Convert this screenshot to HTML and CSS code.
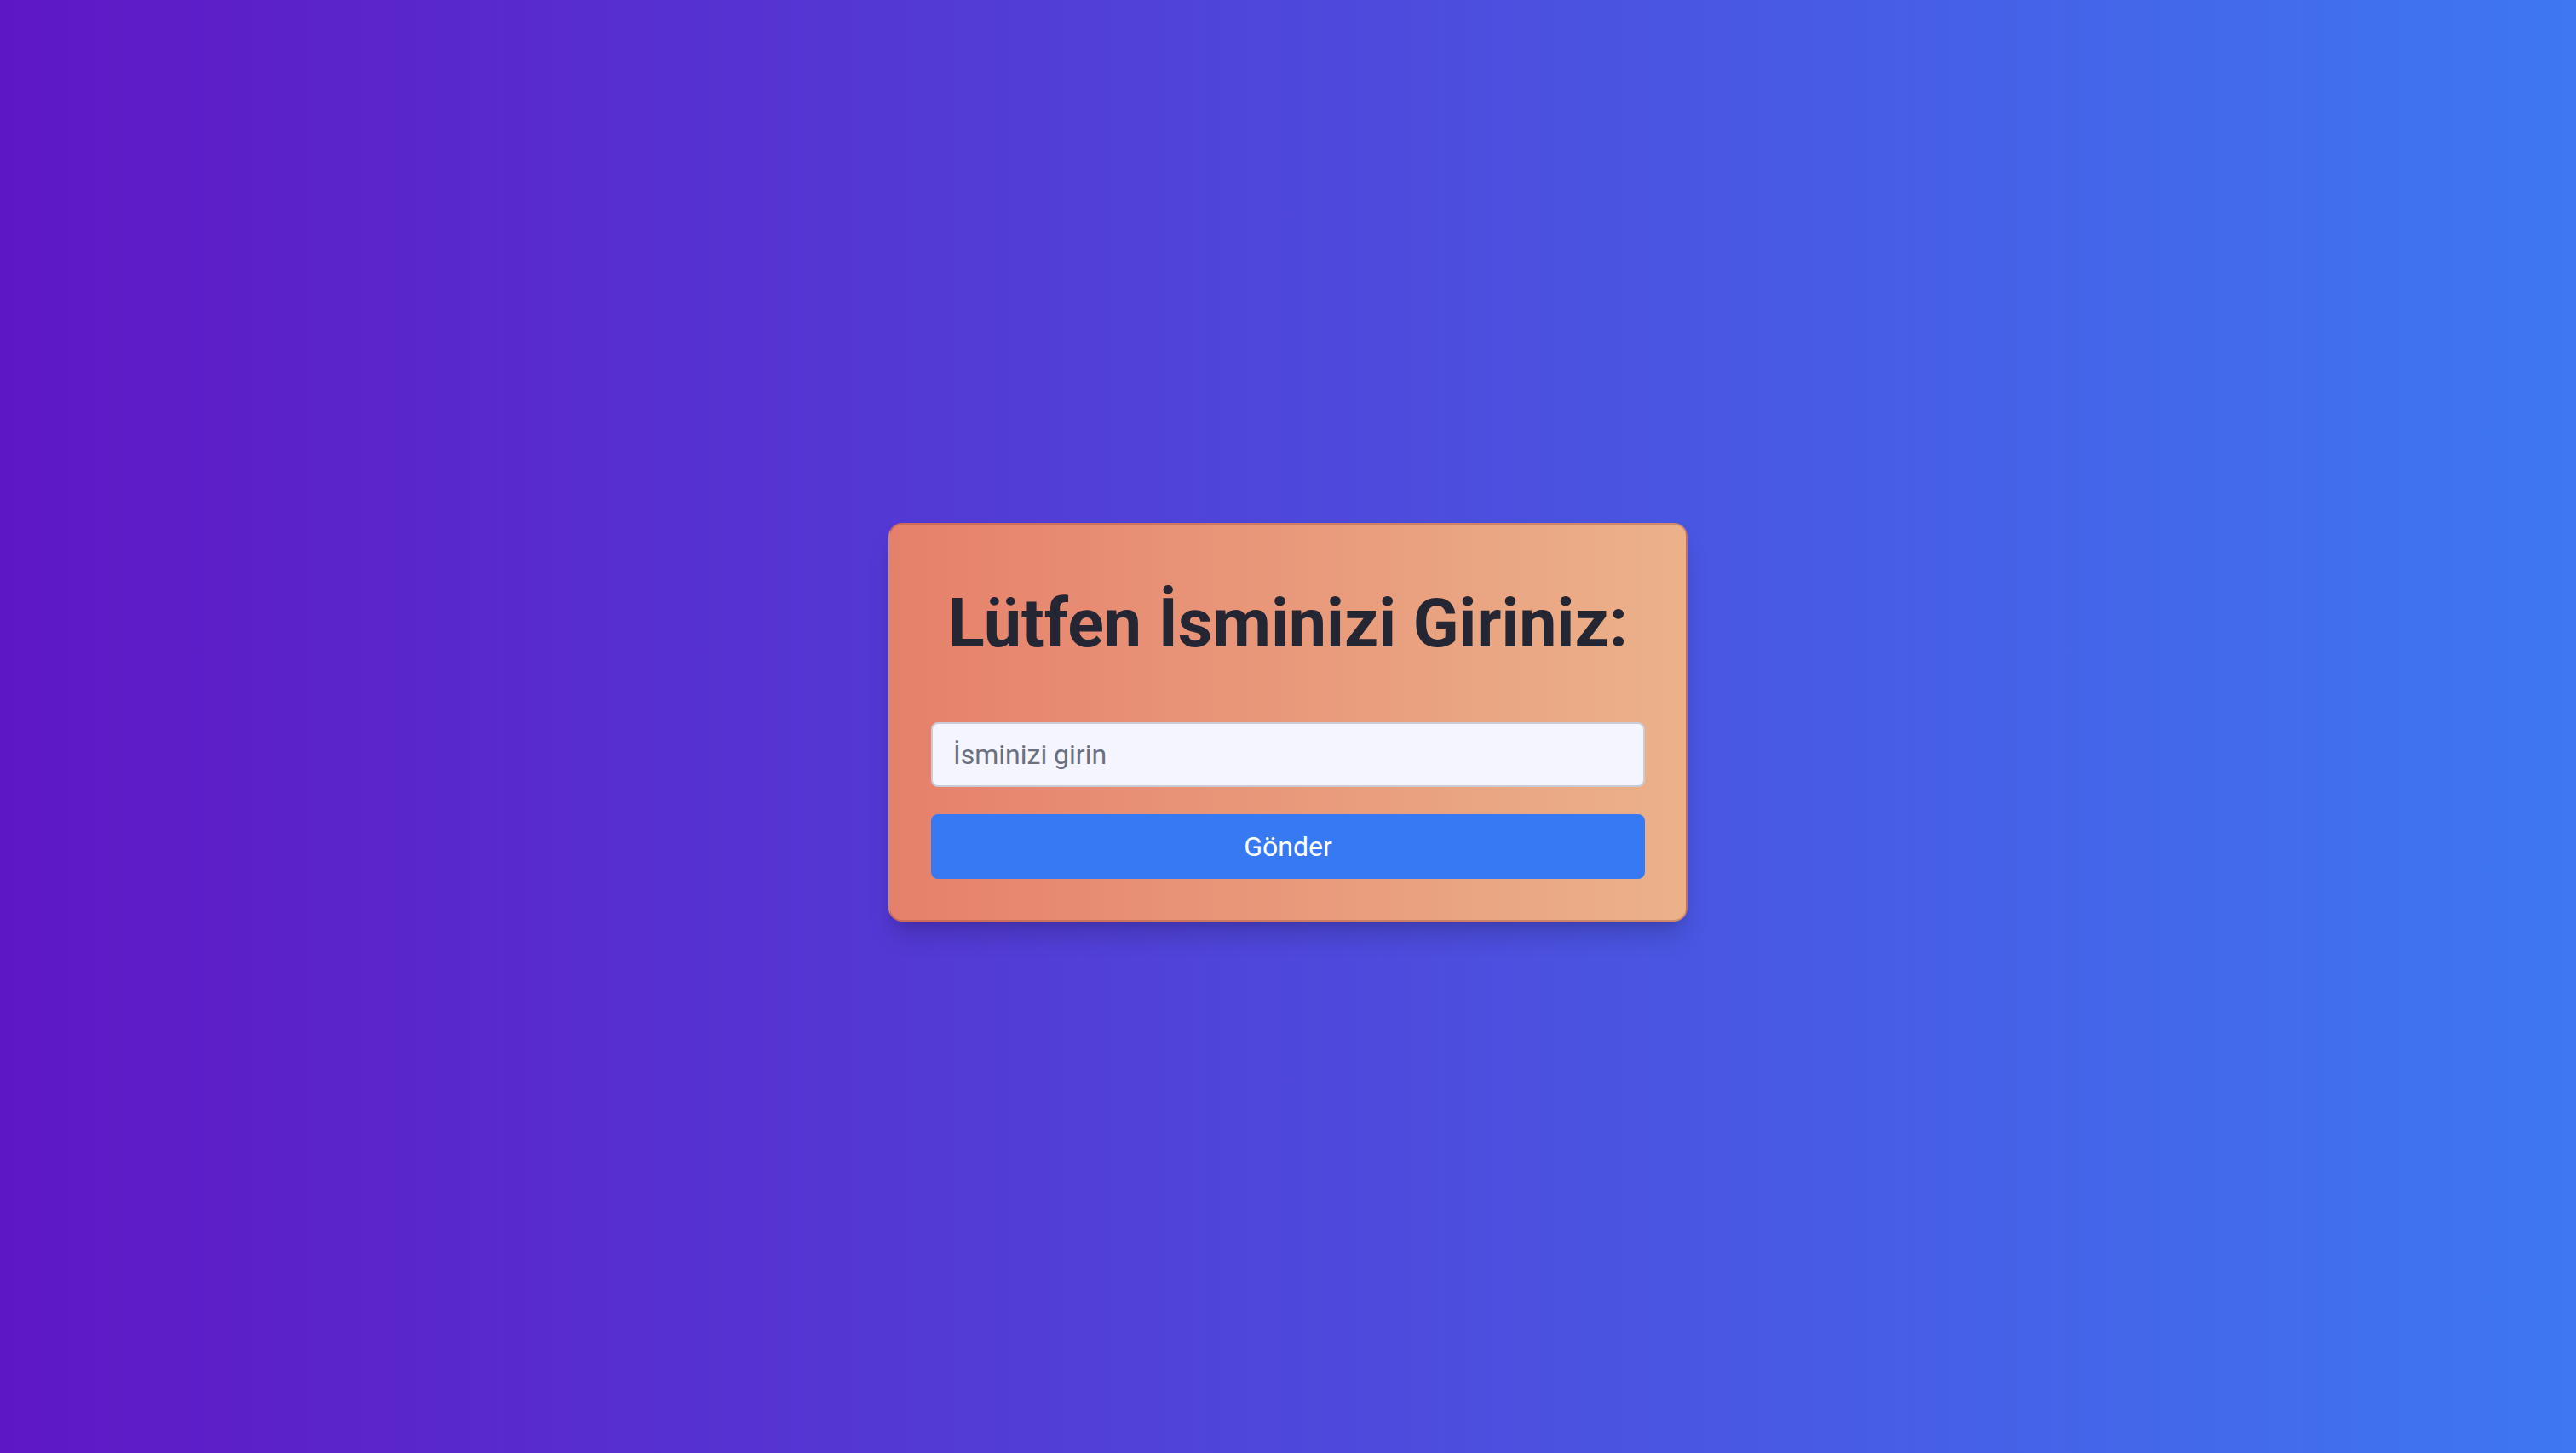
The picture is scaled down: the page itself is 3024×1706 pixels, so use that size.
FILE: index.html
```html
<!DOCTYPE html>
<html lang="tr">
<head>
<meta charset="utf-8">
<title>İsim Girişi</title>
<link rel="stylesheet" href="styles.css">
</head>
<body>
<main class="page">
  <form class="card" onsubmit="return false;">
    <h1 class="title">Lütfen İsminizi Giriniz:</h1>
    <input class="name-input" type="text" placeholder="İsminizi girin">
    <button class="submit-btn" type="submit">Gönder</button>
  </form>
</main>
</body>
</html>
```

FILE: styles.css
```css
* { box-sizing: border-box; }

html, body {
  margin: 0;
  padding: 0;
  height: 100%;
}

body {
  font-family: Roboto, "Liberation Sans", Arial, sans-serif;
  background: linear-gradient(to right, #5f17c5, #3e77f1);
}

.page {
  min-height: 100vh;
  display: flex;
  align-items: center;
  justify-content: center;
  padding-bottom: 11px;
}

.card {
  width: 938px;
  padding: 48px;
  border: 2px solid rgba(150, 70, 50, 0.35);
  border-radius: 16px;
  background: linear-gradient(to right, #e6806b, #ebb28a);
  box-shadow: 0 20px 30px -6px rgba(0, 0, 0, 0.18), 0 8px 12px -8px rgba(0, 0, 0, 0.15);
  display: flex;
  flex-direction: column;
}

.title {
  margin: 21px 0 69px;
  font-size: 79px;
  line-height: 94px;
  font-weight: 700;
  color: #242633;
  text-align: center;
}

.name-input {
  height: 76px;
  width: 100%;
  padding: 0 24px;
  font-family: inherit;
  font-size: 32px;
  color: #242633;
  background: #f4f5fe;
  border: 2px solid #c9cbd7;
  border-radius: 8px;
  outline: none;
}

.name-input::placeholder {
  color: #6b7080;
  opacity: 1;
}

.submit-btn {
  margin-top: 32px;
  height: 76px;
  width: 100%;
  font-family: inherit;
  font-size: 32px;
  font-weight: 400;
  color: #ffffff;
  background: #3779f3;
  border: none;
  border-radius: 8px;
  cursor: pointer;
}
```
